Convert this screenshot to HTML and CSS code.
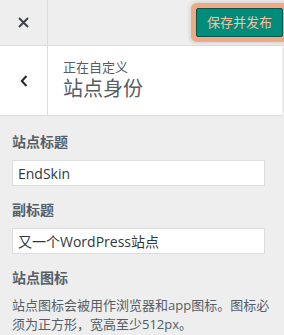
FILE: index.html
```html
<!DOCTYPE html>
<html lang="zh-CN">
<head>
  <meta charset="UTF-8">
  <meta name="viewport" content="width=device-width, initial-scale=1.0">
  <title>站点身份</title>
  <link rel="stylesheet" href="styles.css">
</head>
<body>

  <div class="header">
    <button class="btn-cerrar" aria-label="关闭">
      <svg width="11" height="11" viewBox="0 0 11 11">
        <path d="M1 1 L10 10 M10 1 L1 10" stroke="#3c434a" stroke-width="2" fill="none"/>
      </svg>
    </button>
    <button class="btn-publicar">保存并发布</button>
  </div>

  <div class="titulo">
    <button class="btn-volver" aria-label="返回">
      <svg width="8" height="12" viewBox="0 0 8 12">
        <path d="M6.5 1 L1.8 6 L6.5 11" stroke="#23282d" stroke-width="2" fill="none"/>
      </svg>
    </button>
    <div class="titulo-texto">
      <span class="titulo-sub">正在自定义</span>
      <span class="titulo-main">站点身份</span>
    </div>
  </div>

  <div class="contenido">
    <div class="campo">
      <label>站点标题</label>
      <input type="text" value="EndSkin">
    </div>
    <div class="campo">
      <label>副标题</label>
      <input type="text" value="又一个WordPress站点">
    </div>
    <div class="campo">
      <label>站点图标</label>
      <p class="descripcion">站点图标会被用作浏览器和app图标。图标必须为正方形，宽高至少512px。</p>
    </div>
  </div>

</body>
</html>
```

FILE: styles.css
```css
body {
  font-family: 'Open Sans', 'Noto Sans CJK SC', sans-serif;
  background: #eee;
  margin: 0;
  padding: 0;
  color: #555d66;
  overflow: hidden;
}

.header {
  display: flex;
  align-items: center;
  justify-content: space-between;
  height: 45px;
  border-bottom: 1px solid #ddd;
  background: #eee;
}

.btn-cerrar {
  width: 48px;
  height: 45px;
  border: none;
  border-right: 1px solid #ddd;
  background: transparent;
  padding: 0;
  display: flex;
  align-items: center;
  justify-content: center;
}

.btn-publicar {
  margin-right: 1px;
  height: 29px;
  padding: 0 10px;
  font-family: inherit;
  font-size: 13px;
  line-height: 27px;
  color: #f3c2a2;
  background: #008b7a;
  border: 1px solid #00574d;
  border-radius: 2px;
  box-shadow: 0 0 0 5px #f0a885, 0 0 4px 6px rgba(0,0,0,0.12);
}

.titulo {
  display: flex;
  background: white;
  border-bottom: 1px solid #ddd;
  margin-right: 2px;
}

.btn-volver {
  width: 48px;
  border: none;
  border-right: 1px solid #ddd;
  background: transparent;
  padding: 0;
  display: flex;
  align-items: center;
  justify-content: center;
}

.titulo-texto {
  display: flex;
  flex-direction: column;
  padding: 12px 15px 13px 15px;
}

.titulo-sub {
  font-size: 13px;
  line-height: 18px;
}

.titulo-main {
  font-size: 20px;
  line-height: 26px;
}

.contenido {
  padding: 16px 12px 0 12px;
}

.campo {
  margin-bottom: 14px;
}

label {
  display: block;
  font-size: 14px;
  font-weight: 600;
  line-height: 20px;
  margin-bottom: 8px;
}

input {
  box-sizing: border-box;
  width: 253px;
  height: 26px;
  padding: 0 5px;
  font-family: inherit;
  font-size: 14px;
  color: #32373c;
  background: white;
  border: 1px solid #ddd;
  border-radius: 0;
  outline: none;
}

.descripcion {
  margin: 0;
  font-size: 13px;
  line-height: 19px;
}
```
